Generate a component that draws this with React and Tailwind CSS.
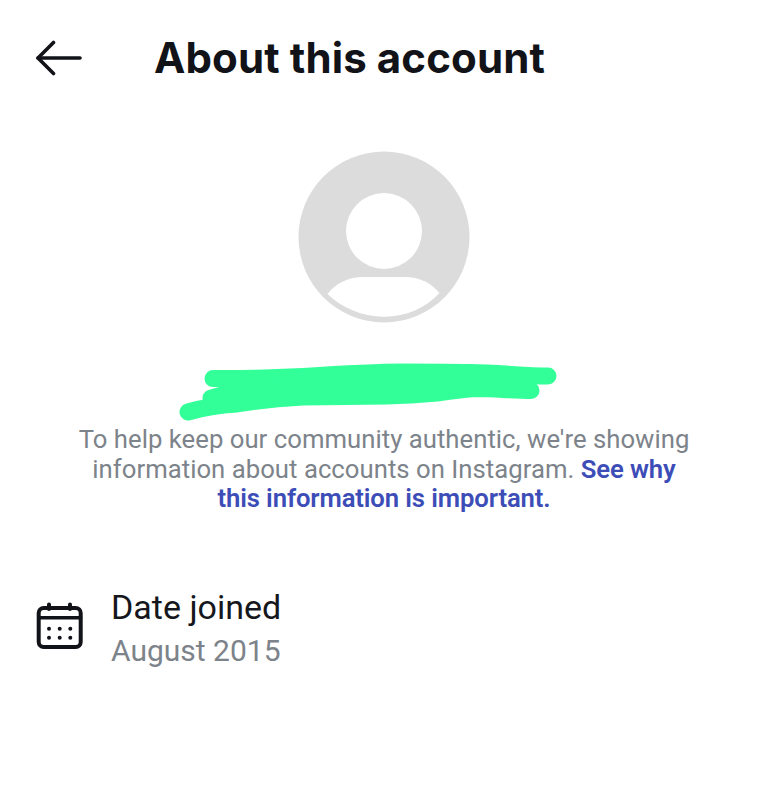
import { useState } from "react";

function BackArrow() {
  return (
    <svg width="48" height="36" viewBox="0 0 48 36" fill="none" stroke="#111318" strokeWidth="3.6" strokeLinecap="round" strokeLinejoin="round">
      <path d="M2 18H44" />
      <path d="M17.5 2.5L2 18L17.5 33.5" />
    </svg>
  );
}

function Avatar() {
  return (
    <svg width="172" height="172" viewBox="0 0 172 172">
      <circle cx="86" cy="86" r="85.5" fill="#dcdcdc" />
      <circle cx="86" cy="80" r="38" fill="#fff" />
      <path d="M29.5 143C38 132 50 126 66 126H106C122 126 133 132 141.5 142C128 157 108 165.7 86 165.7C64 165.7 44 157 29.5 143Z" fill="#fff" />
    </svg>
  );
}

function Scribble() {
  return (
    <svg width="400" height="70" viewBox="0 0 400 70" fill="none" stroke="#33ff99" strokeWidth="17" strokeLinecap="round" strokeLinejoin="round">
      <path d="M43 23.5C75 24 100 23 133 21.5C170 19 205 17 233 17C260 17 280 17 300 17.5C330 18 355 21 378 21" />
      <path d="M41 43C60 37 90 33 133 30" />
      <path d="M18 57C35 52 50 50 67 49C90 45 110 43 133 42C160 41.5 190 41.5 217 41C235 40.5 250 39.5 267 38C280 36 295 34 307 33.5C325 33.5 342 35.5 361 35.5" />
      <path d="M60 33L133 25L233 20L300 20L360 24L360 35L307 33L267 37L217 40L133 41L60 48Z" fill="#33ff99" stroke="none" />
    </svg>
  );
}

function CalendarIcon() {
  return (
    <svg width="48" height="48" viewBox="0 0 48 48" fill="none" stroke="#111318" strokeWidth="4" strokeLinecap="round" strokeLinejoin="round">
      <rect x="2.7" y="6" width="42" height="39" rx="5" />
      <path d="M2.7 15.7H44.7" strokeWidth="3.4" />
      <path d="M13 2.5V7M34 2.5V7" />
      <g fill="#111318" stroke="none">
        <circle cx="13" cy="26.7" r="2" />
        <circle cx="23.7" cy="26.7" r="2" />
        <circle cx="34.3" cy="26.7" r="2" />
        <circle cx="13" cy="35.7" r="2" />
        <circle cx="23.7" cy="35.7" r="2" />
        <circle cx="34.3" cy="35.7" r="2" />
      </g>
    </svg>
  );
}

function App() {
  const [joined] = useState("August 2015");

  return (
    <div className="w-[768px] h-[798px] bg-white overflow-hidden font-['Roboto',sans-serif]">
      {/* Header */}
      <div className="flex items-center pl-[36px] pt-[32px] h-[84px]">
        <button className="w-[118px] flex">
          <BackArrow />
        </button>
        <h1 className="font-['Inter',sans-serif] font-bold text-[42px] tracking-[0.12px] leading-[52px] text-[#111318]">
          About this account
        </h1>
      </div>

      {/* Avatar + scribbled name */}
      <div className="flex flex-col items-center">
        <div className="mt-[67px] flex">
          <Avatar />
        </div>
        <div className="mt-[32px] mr-[28px] flex">
          <Scribble />
        </div>

        <p className="w-[620px] text-center text-[25.7px] leading-[29.5px] tracking-[0.03px] text-[#7d838a]">
          To help keep our community authentic, we're showing information about accounts on Instagram.{" "}
          <a className="font-semibold tracking-[-0.12px] text-[#3d4db7]">See why this information is important.</a>
        </p>
      </div>

      {/* Date joined */}
      <div className="flex items-start gap-[27px] pl-[36px] mt-[71px]">
        <div className="mt-[17px] flex">
          <CalendarIcon />
        </div>
        <div>
          <div className="text-[34px] leading-[44px] text-[#15171c]">Date joined</div>
          <div className="text-[30px] leading-[44px] text-[#7d838a]">{joined}</div>
        </div>
      </div>
    </div>
  );
}

export default App;
